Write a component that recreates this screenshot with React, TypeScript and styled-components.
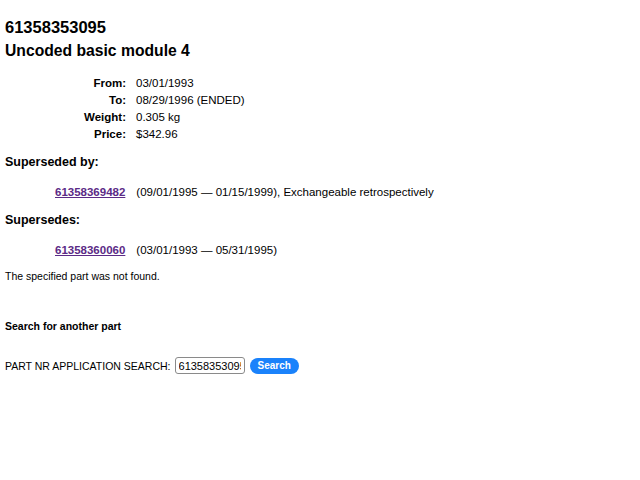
import styled, { createGlobalStyle } from 'styled-components';

const GlobalStyle = createGlobalStyle`
  body {
    margin: 0;
    background: #fff;
    color: #000;
    font-family: "Liberation Sans", Arial, Helvetica, sans-serif;
  }
`;

const Page = styled.div`
  padding: 17px 5px 0;
`;

const PartNumber = styled.h1`
  margin: 0;
  font-size: 16.5px;
  line-height: 20px;
  font-weight: bold;
`;

const PartName = styled.h2`
  margin: 4px 0 0;
  font-size: 15.7px;
  line-height: 20px;
  font-weight: bold;
`;

const InfoTable = styled.div`
  display: grid;
  grid-template-columns: 121px auto;
  column-gap: 10px;
  margin-top: 14px;
  font-size: 11.5px;
  line-height: 17px;
`;

const Label = styled.div`
  text-align: right;
  font-weight: bold;
`;

const Value = styled.div``;

const SectionTitle = styled.h3<{ $gap?: number }>`
  margin: ${({ $gap }) => $gap ?? 11}px 0 0;
  font-size: 12.5px;
  line-height: 16px;
  font-weight: bold;
`;

const RelatedRow = styled.div`
  display: flex;
  gap: 11px;
  margin: 14px 0 0 50px;
  font-size: 11.5px;
  line-height: 16px;
`;

const PartLink = styled.a`
  color: #5b2a86;
  font-weight: bold;
  text-decoration: underline;
`;

const Notice = styled.p`
  margin: 11px 0 0;
  font-size: 10.5px;
  line-height: 14px;
`;

const SearchTitle = styled.h4`
  margin: 36px 0 0;
  font-size: 10.5px;
  line-height: 14px;
  font-weight: bold;
`;

const SearchForm = styled.form`
  display: flex;
  align-items: center;
  gap: 4px;
  margin-top: 24px;
  font-size: 10.5px;
`;

const SearchInput = styled.input`
  box-sizing: border-box;
  width: 70px;
  height: 17px;
  padding: 0 3px;
  border: 1px solid #8a8a8a;
  border-radius: 3px;
  font-family: "Liberation Sans", Arial, sans-serif;
  font-size: 11px;
  color: #000;
`;

const SearchButton = styled.button`
  height: 16px;
  padding: 0 8px;
  margin-left: 1px;
  border: none;
  border-radius: 8px;
  background: #1a82fb;
  color: #fff;
  font-family: "Liberation Sans", Arial, sans-serif;
  font-size: 10px;
  font-weight: bold;
`;

const info = [
  ['From:', '03/01/1993'],
  ['To:', '08/29/1996 (ENDED)'],
  ['Weight:', '0.305 kg'],
  ['Price:', '$342.96'],
];

export default function App() {
  return (
    <>
      <GlobalStyle />
      <Page>
        <PartNumber>61358353095</PartNumber>
        <PartName>Uncoded basic module 4</PartName>

        <InfoTable>
          {info.flatMap(([label, value]) => [
            <Label key={label}>{label}</Label>,
            <Value key={label + '-value'}>{value}</Value>,
          ])}
        </InfoTable>

        <SectionTitle>Superseded by:</SectionTitle>
        <RelatedRow>
          <PartLink href="#">61358369482</PartLink>
          <span>(09/01/1995 — 01/15/1999), Exchangeable retrospectively</span>
        </RelatedRow>

        <SectionTitle $gap={12}>Supersedes:</SectionTitle>
        <RelatedRow>
          <PartLink href="#">61358360060</PartLink>
          <span>(03/01/1993 — 05/31/1995)</span>
        </RelatedRow>

        <Notice>The specified part was not found.</Notice>

        <SearchTitle>Search for another part</SearchTitle>
        <SearchForm onSubmit={(e) => e.preventDefault()}>
          <span>PART NR APPLICATION SEARCH:</span>
          <SearchInput defaultValue="61358353095" />
          <SearchButton type="submit">Search</SearchButton>
        </SearchForm>
      </Page>
    </>
  );
}
